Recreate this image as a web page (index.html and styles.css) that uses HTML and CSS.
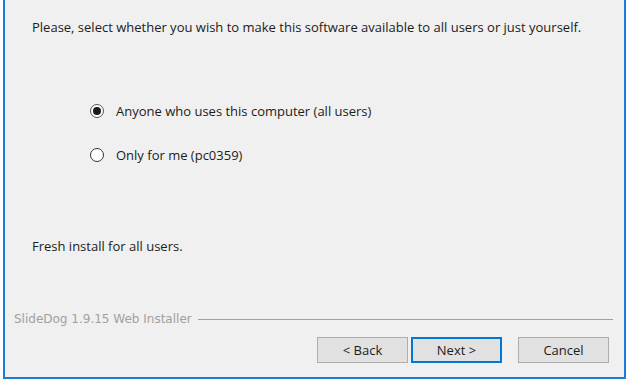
FILE: index.html
```html
<!DOCTYPE html>
<html lang="en">
<head>
    <meta charset="UTF-8">
    <title>SlideDog Setup</title>
    <link rel="stylesheet" href="styles.css">
</head>
<body>
    <div class="window">
        <p class="prompt">Please, select whether you wish to make this software available to all users or just yourself.</p>

        <!-- install scope -->
        <div class="options">
            <label class="option">
                <input type="radio" name="scope" checked>
                <span class="radio"></span>
                Anyone who uses this computer (all users)
            </label>
            <label class="option">
                <input type="radio" name="scope">
                <span class="radio"></span>
                Only for me (pc0359)
            </label>
        </div>

        <p class="status">Fresh install for all users.</p>

        <div class="brand">
            <span>SlideDog 1.9.15 Web Installer</span>
            <div class="rule"></div>
        </div>

        <div class="buttons">
            <button class="btn">&lt; Back</button>
            <button class="btn primary">Next &gt;</button>
            <button class="btn cancel">Cancel</button>
        </div>
    </div>
</body>
</html>
```

FILE: styles.css
```css
body {
    margin: 0;
    background-color: #fff;
    font-family: "Open Sans", "Liberation Sans", sans-serif;
    font-size: 13px;
    color: #1c1c1c;
}

.window {
    box-sizing: border-box;
    width: 623px;
    height: 379px;
    margin-left: 3px;
    background-color: #f0f0f0;
    border: 2px solid #1f7bd8;
    border-top: none;
    display: flex;
    flex-direction: column;
}

.prompt {
    margin: 0;
    padding: 19px 0 0 27px;
    line-height: 16px;
}

.options {
    margin-top: 66px;
    padding-left: 85px;
    display: flex;
    flex-direction: column;
    gap: 24px;
}

.option {
    display: flex;
    align-items: center;
    height: 20px;
}

.option input {
    display: none;
}

.radio {
    box-sizing: border-box;
    width: 14px;
    height: 14px;
    margin-right: 12px;
    border: 1px solid #333;
    border-radius: 50%;
    background-color: #fff;
    display: flex;
    align-items: center;
    justify-content: center;
}

.option input:checked + .radio {
    border-color: #555;
}

.option input:checked + .radio::after {
    content: "";
    width: 8px;
    height: 8px;
    border-radius: 50%;
    background-color: #1a1a1a;
}

.status {
    margin: 73px 0 0 27px;
    line-height: 16px;
}

.brand {
    margin-top: 57px;
    padding: 0 11px 0 9px;
    height: 16px;
    display: flex;
    align-items: center;
    gap: 6px;
    color: #a0a0a0;
    font-family: "DejaVu Sans", sans-serif;
    font-size: 12px;
}

.rule {
    flex: 1;
    border-top: 1px solid #a0a0a0;
}

.buttons {
    margin-top: 10px;
    padding-right: 15px;
    display: flex;
    justify-content: flex-end;
}

.btn {
    width: 91px;
    height: 26px;
    margin-left: 3px;
    background-color: #e1e1e1;
    border: 1px solid #adadad;
    font-family: inherit;
    font-size: 13px;
    color: #1c1c1c;
    padding: 0;
}

.primary {
    border: 2px solid #0078d7;
}

.cancel {
    margin-left: 16px;
}
```
